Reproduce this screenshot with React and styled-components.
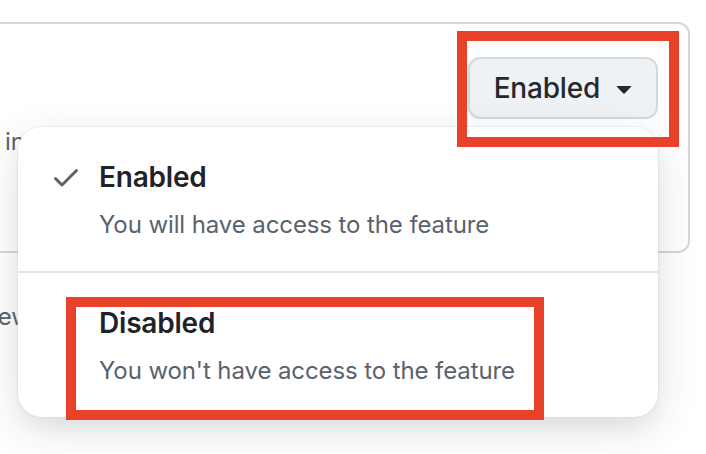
import React from "react";
import styled, { createGlobalStyle } from "styled-components";

const Global = createGlobalStyle`
  html, body { margin: 0; padding: 0; background: #ffffff; }
  body { font-family: Inter, "Noto Sans", "Liberation Sans", sans-serif; -webkit-font-smoothing: antialiased; }
  * { box-sizing: border-box; }
`;

const Page = styled.div`
  width: 706px;
  height: 454px;
  overflow: hidden;
  padding-top: 22px;
  position: relative;
`;

const Card = styled.section`
  margin-left: -27px;
  width: 717px;
  height: 231px;
  border: 2px solid #d1d9e0;
  border-radius: 12px;
  display: flex;
  justify-content: space-between;
  align-items: flex-start;
  padding: 33px 30px 0 30px;
`;

const CardText = styled.p`
  margin: 69px 0 0 0;
  font-size: 24px;
  line-height: 32px;
  color: #59636e;
  white-space: nowrap;
`;

const Anchor = styled.div`
  position: relative;
`;

const Button = styled.button`
  height: 62px;
  display: flex;
  align-items: center;
  gap: 8px;
  padding: 0 16px 0 24px;
  border: 2px solid #d1d9e0;
  border-radius: 12px;
  background: #eff2f5;
  color: #25292e;
  font-family: inherit;
  font-size: 28px;
  font-weight: 500;
  letter-spacing: -0.2px;
  cursor: pointer;
`;

const Menu = styled.div`
  position: absolute;
  top: calc(100% + 8px);
  right: 0;
  width: 640px;
  background: #ffffff;
  border-radius: 24px;
  box-shadow: 0 0 0 1px rgba(209, 217, 224, 0.45),
    0 12px 24px -6px rgba(37, 41, 46, 0.06),
    0 12px 40px 0 rgba(37, 41, 46, 0.14);
  z-index: 2;
`;

const Item = styled.div`
  position: relative;
  display: grid;
  grid-template-columns: 32px 1fr;
  column-gap: 17px;
  padding: 30px 32px 30px 32px;
`;

const Lead = styled.div`
  height: 40px;
  display: flex;
  align-items: center;
  color: #59636e;
`;

const Title = styled.div`
  font-size: 28px;
  line-height: 40px;
  font-weight: 600;
  color: #1f2328;
  letter-spacing: -0.2px;
`;

const Desc = styled.div`
  grid-column: 2;
  margin-top: 12px;
  font-size: 24px;
  line-height: 32px;
  color: #59636e;
  letter-spacing: -0.1px;
`;

const Divider = styled.div`
  height: 2px;
  background: #e4e8ec;
`;

const Annotation = styled.div`
  position: absolute;
  top: ${(p) => p.$top}px;
  left: ${(p) => p.$left}px;
  right: ${(p) => p.$right}px;
  bottom: ${(p) => p.$bottom}px;
  border: 10px solid #e9412a;
  pointer-events: none;
  z-index: 3;
`;

const Footer = styled.p`
  margin: 48px 0 0 -59px;
  font-size: 24px;
  line-height: 32px;
  color: #59636e;
  white-space: nowrap;
`;

const CheckIcon = () => (
  <svg width="32" height="32" viewBox="0 0 16 16" fill="currentColor" aria-hidden="true">
    <path d="M13.78 4.22a.75.75 0 0 1 0 1.06l-7.25 7.25a.75.75 0 0 1-1.06 0L2.22 9.28a.751.751 0 0 1 .018-1.042.751.751 0 0 1 1.042-.018L6 10.94l6.72-6.72a.75.75 0 0 1 1.06 0Z" />
  </svg>
);

const CaretIcon = () => (
  <svg width="32" height="32" viewBox="0 0 16 16" fill="currentColor" aria-hidden="true">
    <path d="m4.427 7.427 3.396 3.396a.25.25 0 0 0 .354 0l3.396-3.396A.25.25 0 0 0 11.396 7H4.604a.25.25 0 0 0-.177.427Z" />
  </svg>
);

const options = [
  { label: "Enabled", desc: "You will have access to the feature", selected: true },
  { label: "Disabled", desc: "You won't have access to the feature", selected: false, marked: true },
];

export default function App() {
  return (
    <Page>
      <Global />
      <Card>
        <CardText>in this repository</CardText>
        <Anchor>
          <Button>
            Enabled
            <CaretIcon />
          </Button>
          <Annotation $top={-26} $left={-11} $right={-21} $bottom={-28} />
          <Menu>
            {options.map((o, i) => (
              <React.Fragment key={o.label}>
                {i > 0 && <Divider />}
                <Item>
                  <Lead>{o.selected && <CheckIcon />}</Lead>
                  <Title>{o.label}</Title>
                  <Desc>{o.desc}</Desc>
                  {o.marked && <Annotation $top={24} $left={48} $right={114} $bottom={-3} />}
                </Item>
              </React.Fragment>
            ))}
          </Menu>
        </Anchor>
      </Card>
      <Footer>Preview</Footer>
    </Page>
  );
}
